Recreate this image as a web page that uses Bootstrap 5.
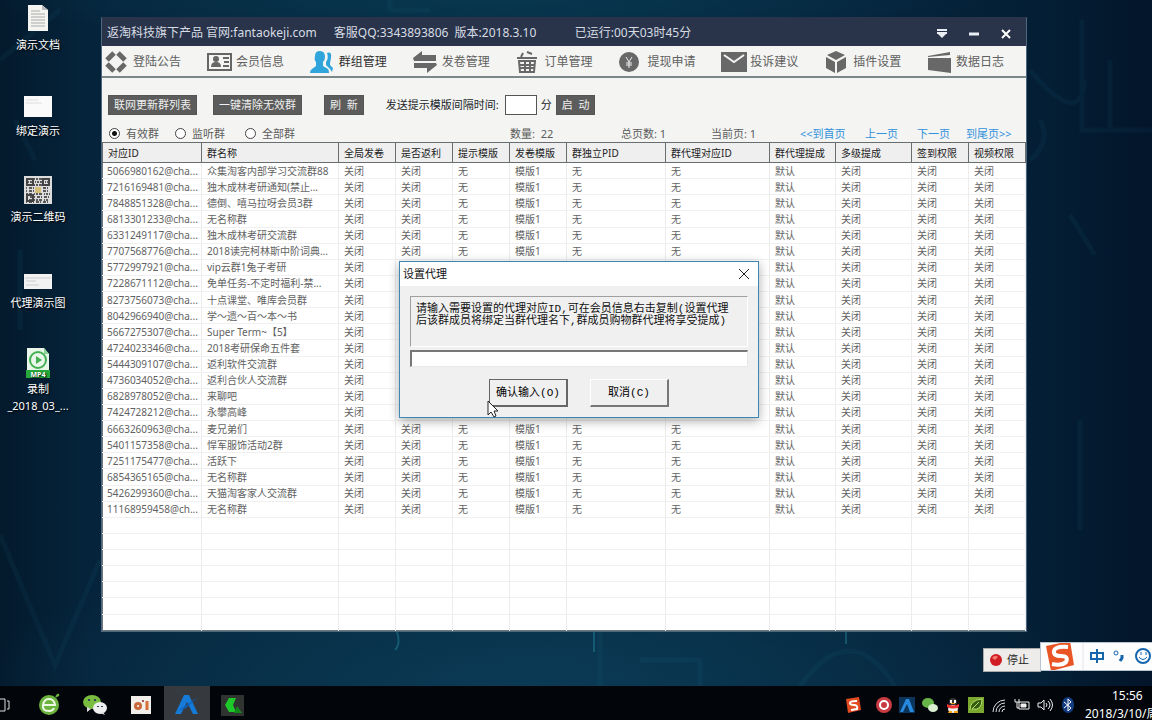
<!DOCTYPE html>
<html lang="zh-CN">
<head>
<meta charset="utf-8">
<meta name="viewport" content="width=device-width, initial-scale=1">
<title>群组管理</title>
<link href="https://cdn.jsdelivr.net/npm/bootstrap@5.3.0/dist/css/bootstrap.min.css" rel="stylesheet">
<style>
:root{--ink:#5c5c5c;--dark:#5b5c5b}
body{font-family:"Noto Sans","Noto Sans CJK SC",sans-serif;font-size:11px;line-height:16px;background:#04182b;overflow:hidden}
.desktop{background:
  radial-gradient(ellipse 560px 150px at 46% 100%,#0b3a54,transparent),
  radial-gradient(ellipse 500px 40px at 42% 0,#07374e,transparent),
  linear-gradient(90deg,#041a2d 0,#05243b 8%,#072c47 50%,#041f35 90%,#03152a 100%)}
.circuit{inset:0;width:100%;height:100%}
.shortcuts{width:76px;flex:none;padding-top:3px}
.shortcut{height:86px;color:#fff;text-shadow:1px 1px 2px #000;text-decoration:none;white-space:nowrap;line-height:17px}
.shortcut svg{display:block;margin-bottom:1px}
.app-window{margin:17px 125px 54px 25px;background:#f4f4f2;border:1px solid #4f687d;border-top-color:#29344a;min-width:0}
.title-bar{height:28px;background:#29344a;color:#d8dce4;font-size:12px;padding:2px 0 0 5px;white-space:pre}
.title-bar .version{width:241px;margin-left:17px}
.title-bar button{width:32px;height:24px}
.plain{border:0;background:none;padding:0}
.main-nav{height:32px;border-bottom:2px solid #7b888a;padding:2px 20px 0 2px}
.main-nav a{width:79px;color:#606060;font-size:12px;text-decoration:none;white-space:nowrap}
.main-nav a.current{color:#303030}
.main-nav svg{width:30px;height:26px;flex:none;margin-right:-1px}
.tool-row{padding:17px 0 0 6px}
.tool-btn{height:20px;background:var(--dark);color:#f0f0f0;border:1px solid #555;padding:0 5px;margin-right:16px;line-height:18px;white-space:pre}
.tool-btn.wide-gap{margin-right:22px}
.mins{width:32px;height:20px;border:1px solid #555;background:#fff;padding:0 2px;margin-left:6px}
.filters{grid-template-columns:66px 70px 1fr 111px 90px 89px 65px 52px 49px 60px;padding:10px 0 0 7px;height:27px;color:var(--ink);white-space:nowrap}
.filters a{color:#3191dc;text-decoration:none}
.filters input{appearance:none;width:11px;height:11px;border:1px solid #444;border-radius:50%;margin:0 6px 0 0;background:#fff}
.filters input:checked{background:radial-gradient(#111 0 2px,#fff 3px)}
.groups{table-layout:fixed;width:100%;height:489px;border-collapse:collapse;background:#fff;font-size:10px;line-height:14px;color:#626262;border:1px solid #6d7779}
.groups th,.groups td{padding:0 0 0 5px;white-space:nowrap;overflow:hidden;vertical-align:middle}
.groups td{height:16px;border-right:1px solid #ececec;border-bottom:1px solid #f0f0f0}
.groups td:first-child{padding-left:4px}
.groups th{height:20px;font-weight:400;color:#222;background:#efefef;border:1px solid #686d70}
.groups tbody tr:last-child td{border-bottom:0}
.dialog{left:399px;top:261px;width:360px;background:#f0f0f0;border:1px solid #3f87b3;box-shadow:0 3px 10px #0005;color:#111}
.dialog-title{height:24px;background:#fff;padding:0 8px 0 3px}
.dialog-text{height:51px;margin:10px 10px 3px;padding:6px 5px;border:1px solid;border-color:#a0a0a0 #fff #fff #a0a0a0;font-family:"Liberation Mono","Noto Sans CJK SC",monospace;line-height:12px;white-space:nowrap}
.dialog-input{display:block;width:calc(100% - 20px);margin:0 10px;height:17px;border:solid;border-width:2px 1px 1px 2px;border-color:#777 #e8e8e8 #e8e8e8 #777;background:#fff;padding:0}
.dialog-actions{padding:12px 0 10px 89px;gap:22px}
.dialog-actions button{width:79px;height:28px;background:#f0f0f0;border:solid;border-width:1px 2px 2px 1px;border-color:#fff #777 #777 #fff;font-family:"Liberation Mono","Noto Sans CJK SC",monospace;padding:0}
.dialog-actions .default{border-color:#666}
.pointer{left:487px;top:400px}
.recorder{left:983px;top:648px;width:58px;height:24px;background:#eeecea;border:1px solid #aaa;color:#222;padding:0 5px;gap:4px}
.ime{left:1040px;top:642px;right:0;height:29px;background:#fdfdfe;border:1px solid #b8c4d0;border-right:0;overflow:hidden;color:#1565ad}
.taskbar{height:34px;background:#02060b;overflow:hidden;color:#fff}
.pinned a{width:46px;height:34px}
.pinned a:first-child{width:26px}
.pinned a.open{background:#363a3f}
.tray{gap:7px;margin-right:9px}
.tray svg{width:16px;height:16px}
.clock{width:67px;font-size:12px;line-height:18px;padding-top:3px;white-space:nowrap}
.clock time{display:block;padding-left:27px}
</style>
</head>
<body class="d-flex flex-column min-vh-100">
<main class="desktop position-relative d-flex flex-grow-1">
  <svg class="circuit position-absolute" fill="none" stroke="#2490a8" stroke-opacity=".07" stroke-width="5" aria-hidden="true">
    <path d="M0 535 55 665 100 560M0 60 60 10M15 120 35 160M1082 20v110h70M1110 60v70M1030 70q50 60 55 10M1030 160q22-18 10-40M600 632v60M640 660h60v30M800 686q50-70 95 0M1080 420v110M20 250v80M390 0v10h40M1070 215 1095 255"/>
    <path stroke-opacity=".4" stroke-width="2" d="M846 632v12M397 632q4 12-2 18M594 632v20"/>
  </svg>

  <nav class="shortcuts position-relative d-flex flex-column" aria-label="桌面">
    <a href="#" class="shortcut d-flex flex-column align-items-center"><svg width="30" height="32"><path d="M5 2h14l6 5v21H5z" fill="#f4f4f0"/><path d="M19 2v5h6" fill="#bbb"/><path d="M8 8h9M8 11h14M8 14h14M8 17h14M8 20h14M8 23h14" stroke="#aaa"/></svg>演示文档</a>
    <a href="#" class="shortcut d-flex flex-column align-items-center"><svg width="30" height="32"><path d="M1 7h28v21H1z" fill="#fafafa"/><path d="M3 11h12M3 14h16" stroke="#ddd"/></svg>绑定演示</a>
    <a href="#" class="shortcut d-flex flex-column align-items-center"><svg width="30" height="32"><path d="M1 1h28v28H1z" fill="#dcdcdc"/><g stroke="#5a5a5a" stroke-width="2"><path stroke-dasharray="2 1 3 2 1 1" d="M3 4h24M4 7h23M3 10h24M3 25h23M3 19h24"/><path stroke-dasharray="1 2 3 1" d="M3 13h24M3 16h24M4 22h24M3 27h24"/></g><path d="M4 4h6v6H4zM20 4h6v6h-6zM4 20h6v6H4z" fill="none" stroke="#444" stroke-width="2"/><path d="M12 12h6v6h-6z" fill="#d6c079"/></svg>演示二维码</a>
    <a href="#" class="shortcut d-flex flex-column align-items-center"><svg width="30" height="32"><path d="M1 13h28v15H1z" fill="#f2f2f2"/><path d="M2 17h26M3 20h10M3 24h13" stroke="#ccc"/></svg>代理演示图</a>
    <a href="#" class="shortcut d-flex flex-column align-items-center"><svg width="30" height="32"><path d="M4 1h17l5 6v23H4z" fill="#e9f7ea"/><path d="M21 1v6h5" fill="#8dd194"/><circle cx="15" cy="13" r="8" fill="none" stroke="#43b052" stroke-width="2"/><path d="m13 9 6 4-6 4z" fill="#43b052"/><path d="M3 23h24v8H3z" fill="#26a83a"/><text x="15" y="30" font-size="7" font-weight="700" fill="#fff" text-anchor="middle">MP4</text></svg>录制<span>_2018_03_...</span></a>
  </nav>

  <section class="app-window position-relative flex-grow-1" aria-label="群组管理">
    <header class="title-bar d-flex align-items-center"><span>返淘科技旗下产品 官网:fantaokeji.com</span><span class="version">客服QQ:3343893806  版本:2018.3.10</span><span>已运行:00天03时45分</span>
      <button class="plain ms-auto" aria-label="菜单"><svg width="12" height="10"><path d="M1 1h10M1 4h10" stroke="#e8eef4" stroke-width="2"/><path d="M2 5h8L6 9z" fill="#e8eef4"/></svg></button><button class="plain" aria-label="最小化"><svg width="12" height="10"><path d="M1 5h10" stroke="#e8eef4" stroke-width="3"/></svg></button><button class="plain me-1" aria-label="关闭"><svg width="12" height="12"><path d="m2 2 8 8m0-8-8 8" stroke="#fff" stroke-width="2"/></svg></button></header>

    <nav class="main-nav d-flex justify-content-between align-items-center" aria-label="主菜单">
      <a href="#" class="d-flex align-items-center"><svg viewBox="0 0 30 26"><path d="m3 11 7-7M14 4l7 7M21 15l-7 7M10 22l-7-7" fill="none" stroke="#686868" stroke-width="5"/></svg>登陆公告</a>
      <a href="#" class="d-flex align-items-center"><svg viewBox="0 0 30 26"><path d="M1 5h23v16H1z" fill="none" stroke="#666" stroke-width="2"/><circle cx="9" cy="10" r="3" fill="#666"/><path d="M4 18q0-5 5-5t5 5zM16 8h6v2h-6zM17 12h5v2h-5zM16 16h6v2h-6z" fill="#666"/></svg>会员信息</a>
      <a href="#" class="current d-flex align-items-center" aria-current="page"><svg viewBox="0 0 30 26" fill="#2fa5dc"><path d="M10 2q5 0 5 6 0 3-2 5v4l5 3q1 1 1 4H0q0-3 2-4l4-3v-4Q4 11 5 7q0-5 5-5zM17 4q5-2 4 5l-1 5v2l3 3-1 4-2-3-4-4v-3q3-4 1-9z"/></svg>群组管理</a>
      <a href="#" class="d-flex align-items-center"><svg viewBox="0 0 30 26" fill="#686868"><path d="m0 9 9-7v4h14v6H1zM24 16 14 24v-5H1v-5h22z"/></svg>发卷管理</a>
      <a href="#" class="d-flex align-items-center"><svg viewBox="0 0 30 26"><path d="M1 9h20M3 12l1 11h14l1-11zM9 12v11M14 12v11M4 16h15M4 19h15M5 8l2-4M16 5l-5-2" fill="none" stroke="#686868" stroke-width="2"/></svg>订单管理</a>
      <a href="#" class="d-flex align-items-center"><svg viewBox="0 0 30 26"><circle cx="11" cy="13" r="10" fill="#686868"/><path d="m8 8 3 5 3-5M11 13v6M8 14h6M8 16h6" fill="none" stroke="#eee"/></svg>提现申请</a>
      <a href="#" class="d-flex align-items-center"><svg viewBox="0 0 30 26"><path d="M0 3h26v20H0z" fill="#686868"/><path d="m3 6 10 7 10-7" fill="none" stroke="#f4f4f2" stroke-width="2"/></svg>投诉建议</a>
      <a href="#" class="d-flex align-items-center"><svg viewBox="0 0 30 26" fill="#686868"><path d="m12 2 9 4-9 5-9-5zM2 8l9 5v11l-9-5zM22 8l-9 5v11l9-5z"/></svg>插件设置</a>
      <a href="#" class="d-flex align-items-center"><svg viewBox="0 0 30 26" fill="#686868"><path d="m1 7 22-4v3L1 8zM1 9h23v15L1 21z"/></svg>数据日志</a>
    </nav>

    <form class="tool-row d-flex align-items-center">
      <button type="button" class="tool-btn">联网更新群列表</button>
      <button type="button" class="tool-btn wide-gap">一键清除无效群</button>
      <button type="button" class="tool-btn wide-gap">刷  新</button>
      <label for="mins">发送提示模版间隔时间:</label>
      <input id="mins" class="mins">
      <span class="mx-1">分</span>
      <button type="button" class="tool-btn">启  动</button>
    </form>
    <div class="filters d-grid align-items-center">
      <label class="d-flex align-items-center"><input type="radio" name="kind" checked>有效群</label>
      <label class="d-flex align-items-center"><input type="radio" name="kind">监听群</label>
      <label class="d-flex align-items-center"><input type="radio" name="kind">全部群</label>
      <span>数量:&nbsp; 22</span><span>总页数: 1</span><span>当前页: 1</span>
      <a href="#">&lt;&lt;到首页</a><a href="#">上一页</a><a href="#">下一页</a><a href="#">到尾页&gt;&gt;</a>
    </div>
    <table class="groups">
      <colgroup><col style="width:99px"><col style="width:137px"><col style="width:57px"><col style="width:57px"><col style="width:57px"><col style="width:57px"><col style="width:99px"><col style="width:104px"><col style="width:66px"><col style="width:76px"><col style="width:57px"><col style="width:57px"></colgroup>
      <thead><tr><th>对应ID</th><th>群名称</th><th>全局发卷</th><th>是否返利</th><th>提示模版</th><th>发卷模版</th><th>群独立PID</th><th>群代理对应ID</th><th>群代理提成</th><th>多级提成</th><th>签到权限</th><th>视频权限</th></tr></thead>
      <tbody id="rows"></tbody>
    </table>
  </section>

  <section class="dialog position-absolute" role="dialog" aria-labelledby="dlg-title">
    <div class="dialog-title d-flex align-items-center justify-content-between"><span id="dlg-title">设置代理</span><button class="plain d-flex" aria-label="关闭"><svg width="12" height="12"><path d="m1 1 10 10m0-10L1 11" stroke="#222"/></svg></button></div>
    <label for="agent" class="dialog-text d-block">请输入需要设置的代理对应ID,可在会员信息右击复制(设置代理<br>后该群成员将绑定当群代理名下,群成员购物群代理将享受提成)</label>
    <input id="agent" class="dialog-input">
    <div class="dialog-actions d-flex"><button class="default">确认输入(O)</button><button>取消(C)</button></div>
  </section>
  <svg class="pointer position-absolute" width="12" height="18" aria-hidden="true"><path d="M1 1v14l3-3 3 5 2-1-2-5h4z" fill="#fff" stroke="#222"/></svg>

  <button class="recorder position-absolute d-flex align-items-center"><svg width="14" height="14"><circle cx="7" cy="7" r="6" fill="#d01c24"/><path d="M3 5q3-4 6-1l-3 3z" fill="#f07a70"/></svg>停止</button>
  <div class="ime position-absolute d-flex align-items-center">
    <svg width="38" height="29" class="flex-shrink-0"><path d="m5 4 24-5 4 24-23 6z" fill="#ea5526"/><path d="M27 5q-13-1-14 4t7 5 5 6q-4 4-14 2" fill="none" stroke="#fff" stroke-width="4"/></svg>
    <svg width="74" height="29" class="flex-shrink-0" fill="none" stroke="#1565ad" stroke-width="2"><path d="M4 0v29" stroke="#e2e5ea" stroke-width="1"/><path d="M12 11h12v6H12zM18 7v14"/><circle cx="37" cy="11" r="2" stroke-width="1"/><path d="M43 13v3l-2 3" stroke-width="3"/><circle cx="64" cy="14" r="7"/><path d="M62 10v3M67 10v3M60 15q4 5 8 0" stroke-width="1"/></svg>
  </div>
</main>

<footer class="taskbar d-flex align-items-center justify-content-between">
  <nav class="pinned d-flex" aria-label="任务栏">
    <a href="#" aria-label="任务视图"><svg width="26" height="34" fill="none" stroke="#ddd"><path d="M0 13h5v12H0M7 15h2v8H7"/></svg></a>
    <a href="#" aria-label="浏览器"><svg width="46" height="34"><circle cx="23" cy="19" r="10" fill="#6cb33e"/><path d="M30 11q3-4 2-1" stroke="#6cb33e" stroke-width="2" fill="none"/><path d="M18 19h11q-1-6-6-6t-6 6 6 6q4 0 5-3" fill="none" stroke="#edf8e5" stroke-width="2"/></svg></a>
    <a href="#" aria-label="微信"><svg width="46" height="34"><ellipse cx="20" cy="16" rx="9" ry="7" fill="#78bd3f"/><ellipse cx="28" cy="22" rx="7" ry="6" fill="#eee"/><path d="M15 21v5l4-3M31 26l2 3-5-2" fill="#ddd"/><path d="M17 13v2M23 13v2M26 20v1M30 20v1" stroke="#345" stroke-width="2"/></svg></a>
    <a href="#" aria-label="录屏"><svg width="46" height="34"><path d="M13 10h20v18H13z" fill="#f2eeea"/><circle cx="20" cy="20" r="4" fill="#c8693b"/><circle cx="20" cy="20" r="1" fill="#fff"/><path d="M29 15v9" stroke="#d66f38" stroke-width="3"/><path d="M24 14h2v2h-2z" fill="#a55"/></svg></a>
    <a href="#" class="open" aria-label="群组管理"><svg width="46" height="34"><path d="m11 28 9-19h5l9 19h-5l-6-12-6 12z" fill="#167ad8"/><path d="m14 25 20-14-12 11z" fill="#0d5fba"/></svg></a>
    <a href="#" aria-label="应用"><svg width="46" height="34"><path d="M11 9h23v21H11z" fill="#303430"/><path d="M15 19l4-7h7l-3 7 3 7h-7z" fill="#1dc829"/><path d="m27 20 5 7h-8z" fill="#108b1b"/></svg></a>
  </nav>
  <div class="d-flex align-items-center">
    <div class="tray d-flex align-items-center pt-1">
      <svg class="me-2"><path d="m1 2 13-2 2 13-13 3z" fill="#e24a20"/><path d="M12 4q-7 0-7 2t4 2 3 4l-6 1" fill="none" stroke="#fff" stroke-width="2"/></svg>
      <svg><circle cx="8" cy="8" r="8" fill="#c83a42"/><circle cx="8" cy="8" r="4" fill="none" stroke="#fff" stroke-width="2"/></svg>
      <svg><path d="M0 0h16v16H0z" fill="#0c355c"/><path d="M1 15 7 2h3l5 13h-4L8 7l-4 8z" fill="#2789df"/></svg>
      <svg><ellipse cx="6" cy="6" rx="6" ry="5" fill="#67b548"/><ellipse cx="11" cy="11" rx="5" ry="4" fill="#d9efd0"/></svg>
      <svg><circle cx="8" cy="5" r="4" fill="#333"/><path d="M5 3h2v3H5zM9 3h2v3H9z" fill="#fff"/><ellipse cx="8" cy="12" rx="5" ry="4" fill="#f2eee8"/><path d="M2 7q6 3 12 0v3q-6 3-12 0z" fill="#e33"/><path d="M4 14h3v2H3zM9 14h4v2H9zM6 6h4v1H6z" fill="#f6a21e"/></svg>
      <svg><path d="M0 0h16v16H0z" fill="#7ba930"/><path d="M2 13Q2 3 14 2q0 12-10 10l7-7" fill="#315c11" stroke="#b7df6a"/></svg>
      <svg fill="none" stroke="#ddd"><path d="M2 15A12 12 0 0 1 14 3M5 15a9 9 0 0 1 9-9M8 15a6 6 0 0 1 6-6M11 15a3 3 0 0 1 3-3"/></svg>
      <svg fill="none" stroke="#eee"><path d="M5 5h10v7H5zM1 2v3h4V2M3 5v6h2"/><path d="M7 7h5v3H7z" fill="#eee"/></svg>
      <svg fill="none" stroke="#eee"><path d="M1 6h3l3-3v10l-3-3H1zM9 6q2 2 0 4M11 4q4 4 0 8M13 2q5 6 0 12"/></svg>
      <svg><ellipse cx="8" cy="8" rx="6" ry="8" fill="#143d82"/><path d="m4 5 7 6-3 3V2l3 3-7 6" fill="none" stroke="#fff"/></svg>
    </div>
    <div class="clock"><time>15:56</time>2018/3/10/周</div>
  </div>
</footer>

<script src="https://cdn.jsdelivr.net/npm/bootstrap@5.3.0/dist/js/bootstrap.bundle.min.js"></script>
<script>
const groups = [
  ['5066980162@cha...','众集淘客内部学习交流群88'],
  ['7216169481@cha...','独木成林考研通知(禁止...'],
  ['7848851328@cha...','德倒、嘻马拉呀会员3群'],
  ['6813301233@cha...','无名称群'],
  ['6331249117@cha...','独木成林考研交流群'],
  ['7707568776@cha...','2018读完柯林斯中阶词典...'],
  ['5772997921@cha...','vip云群1兔子考研'],
  ['7228671112@cha...','免单任务-不定时福利-禁...'],
  ['8273756073@cha...','十点课堂、唯库会员群'],
  ['8042966940@cha...','学～遗～百～本～书'],
  ['5667275307@cha...','Super Term~【5】'],
  ['4724023346@cha...','2018考研保命五件套'],
  ['5444309107@cha...','返利软件交流群'],
  ['4736034052@cha...','返利合伙人交流群'],
  ['6828978052@cha...','来聊吧'],
  ['7424728212@cha...','永攀高峰'],
  ['6663260963@cha...','麦兄弟们'],
  ['5401157358@cha...','悍军服饰活动2群'],
  ['7251175477@cha...','活跃下'],
  ['6854365165@cha...','无名称群'],
  ['5426299360@cha...','天猫淘客家人交流群'],
  ['11168959458@ch...','无名称群']
];
const settings = ['关闭','关闭','无','模版1','无','无','默认','关闭','关闭','关闭'];
const body = document.getElementById('rows');
for (let i = 0; i < 29; i++) {
  const tr = body.insertRow();
  const cells = groups[i] ? [...groups[i], ...settings] : Array(12).fill('');
  cells.forEach(text => { tr.insertCell().textContent = text; });
}
</script>
</body>
</html>
